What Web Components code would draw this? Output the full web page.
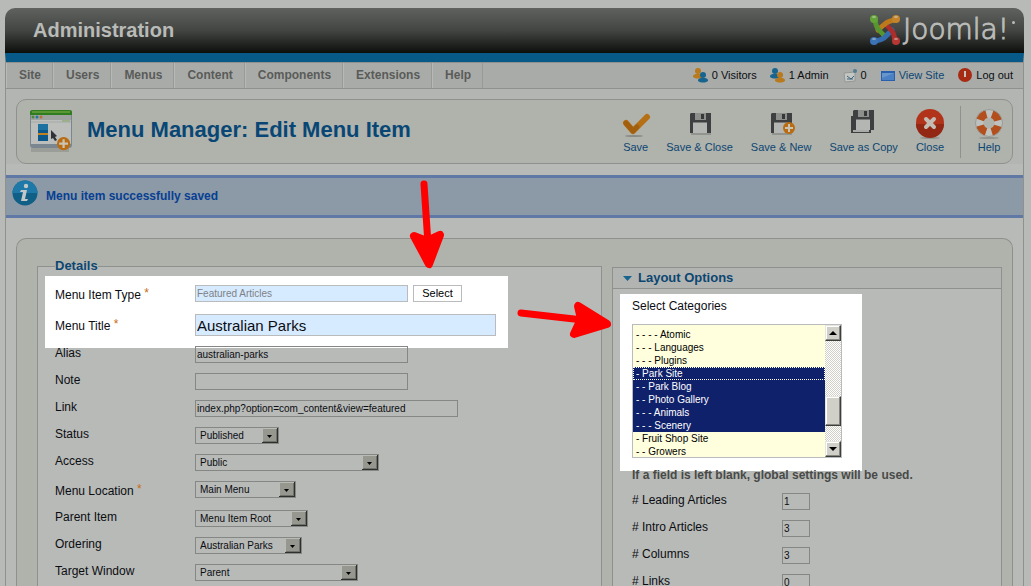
<!DOCTYPE html>
<html lang="en">
<head>
<meta charset="utf-8">
<title>Administration</title>
<style>
  html {
    scrollbar-width: none;
  }
  body {
    margin: 0;
    background: #b8bab7;
    color: #0b0d12;
    font: 12px/15px "Liberation Sans", Arial, sans-serif;
    --line: #8f918e;
    --link: #0c4672;
    --panel: #b0b2ac;
    --page: #b8bab7;
  }
</style>
</head>
<body>
<admin-page>
  <admin-header slot="header" heading="Administration"></admin-header>
  <menu-bar slot="header">
    <menu-entry>Site</menu-entry>
    <menu-entry>Users</menu-entry>
    <menu-entry>Menus</menu-entry>
    <menu-entry>Content</menu-entry>
    <menu-entry>Components</menu-entry>
    <menu-entry>Extensions</menu-entry>
    <menu-entry>Help</menu-entry>
    <status-item slot="status" icon="visitors">0 Visitors</status-item>
    <status-item slot="status" icon="admin">1 Admin</status-item>
    <status-item slot="status" icon="mail">0</status-item>
    <status-item slot="status" icon="screen" href="#site">View Site</status-item>
    <status-item slot="status" icon="power">Log out</status-item>
  </menu-bar>
  <tool-bar heading="Menu Manager: Edit Menu Item" icon="menu-add">
    <tool-button icon="save">Save</tool-button>
    <tool-button icon="disk">Save &amp; Close</tool-button>
    <tool-button icon="disk-new">Save &amp; New</tool-button>
    <tool-button icon="disk-copy">Save as Copy</tool-button>
    <tool-button icon="close">Close</tool-button>
    <tool-button icon="help" divided>Help</tool-button>
  </tool-bar>
  <system-message>Menu item successfully saved</system-message>
  <edit-layout>
    <details-group slot="main" heading="Details">
      <spot-light class="fields">
        <field-row label="Menu Item Type" value="Featured Articles" width="213" required readonly>
          <small-button>Select</small-button>
        </field-row>
        <field-row label="Menu Title" value="Australian Parks" width="301" required large></field-row>
      </spot-light>
      <field-row label="Alias" value="australian-parks" width="213"></field-row>
      <field-row label="Note" width="213"></field-row>
      <field-row label="Link" value="index.php?option=com_content&amp;view=featured" width="263"></field-row>
      <field-row type="select" label="Status" value="Published" width="84"></field-row>
      <field-row type="select" label="Access" value="Public" width="184"></field-row>
      <field-row type="select" label="Menu Location" value="Main Menu" width="101" required></field-row>
      <field-row type="select" label="Parent Item" value="Menu Item Root" width="113"></field-row>
      <field-row type="select" label="Ordering" value="Australian Parks" width="107"></field-row>
      <field-row type="select" label="Target Window" value="Parent" width="163"></field-row>
    </details-group>
    <option-panel slot="side" heading="Layout Options">
      <spot-light class="list">
        <category-list label="Select Categories"></category-list>
      </spot-light>
      <hint-text>If a field is left blank, global settings will be used.</hint-text>
      <field-row class="wide" label="# Leading Articles" value="1" width="28"></field-row>
      <field-row class="wide" label="# Intro Articles" value="3" width="28"></field-row>
      <field-row class="wide" label="# Columns" value="3" width="28"></field-row>
      <field-row class="wide" label="# Links" value="0" width="28"></field-row>
    </option-panel>
  </edit-layout>
  <arrow-marks slot="marks"></arrow-marks>
</admin-page>

<script>
const disk = `
  <path d="M6 2h20v20H5V3z" fill="#3d3f40"/>
  <path d="M10 2h11v7H10z" fill="#8d8f8d"/><path d="M16 3h3v5h-3z" fill="#353738"/>
  <path d="M8 11h14v11H8z" fill="#b4b6b3"/><path d="M8 11h14v1H8z" fill="#777976"/>`

const plus = `
  <circle cx="6" cy="6" r="6" fill="#b96c12"/>
  <path d="M6 2v8M2 6h8" stroke="#c9c5b5" stroke-width="2"/>`

const person = (x, y, fill) => `
  <g transform="translate(${x} ${y})" fill="${fill}">
    <circle cx="5" cy="3" r="3"/><path d="M0 9c0-3 2-3 5-3s5 0 5 3c-3 2-7 2-10 0z"/>
  </g>`

const icons = {
  visitors: ['0 0 16 16', person(0, 0, '#b9791d') + person(5, 4, '#17658f')],
  admin: ['0 0 16 16', person(0, 0, '#17658f') + person(5, 4, '#b9791d')],
  mail: ['0 0 16 16', `
    <path d="M2 5l11-1v9l-10 1z" fill="#c4c6c3" stroke="#959793"/>
    <path d="M5 8l4 3 3-3M5 11h6" stroke="#3e667e" fill="none"/>
    <circle cx="13" cy="3" r="2" fill="#557b90"/>`],
  screen: ['0 0 16 16', `
    <path d="M1 3h14v10H1z" fill="#285fae"/><path d="M2 5h12v7H2z" fill="#4b80c5"/>
    <path d="M2 5h12L2 10z" fill="#6796cd"/>`],
  power: ['0 0 16 16', `
    <circle cx="8" cy="7" r="7" fill="#a72a12"/>
    <path d="M8 3v6" stroke="#c7c4bf" stroke-width="2"/>`],
  save: ['0 0 32 32', `
    <ellipse cx="14" cy="28" rx="9" ry="1" fill="#888a86"/>
    <path d="M6 15l7 8L27 9" fill="none" stroke="#b56f14" stroke-width="6" stroke-linecap="round" stroke-linejoin="round"/>
    <path d="M6 15l7 8 4-4" fill="none" stroke="#a2600f" stroke-width="5" stroke-linecap="round" stroke-linejoin="round"/>`],
  disk: ['0 0 32 32', `<g transform="translate(1 3)"><path d="M6 23h20" stroke="#92948f" stroke-width="2"/>${disk}</g>`],
  'disk-new': ['0 0 32 32', `<g transform="translate(1 3)"><path d="M6 23h20" stroke="#92948f" stroke-width="2"/>${disk}</g>
    <g transform="translate(18 14)">${plus}</g>`],
  'disk-copy': ['0 0 32 32', `
    <path d="M3 8h20v17H3z" fill="#3d3f40"/><path d="M5 12h16v12H5z" fill="#a9aba8"/>
    <g>${disk}</g>`],
  close: ['0 0 32 32', `
    <ellipse cx="16" cy="30" rx="10" ry="1" fill="#91938e"/>
    <circle cx="16" cy="15" r="14" fill="#b1341a"/><path d="M2 16a14 14 0 0 0 28 0z" fill="#922814"/>
    <path d="M12 11l8 8M20 11l-8 8" stroke="#c3bcb5" stroke-width="4" stroke-linecap="round"/>`],
  help: ['0 0 32 32', `
    <ellipse cx="16" cy="30" rx="10" ry="1" fill="#91938e"/>
    <circle cx="16" cy="15" r="9.5" fill="none" stroke="#bfc1be" stroke-width="8"/>
    <circle cx="16" cy="15" r="9.5" fill="none" stroke="#b24f1d" stroke-width="8"
      stroke-dasharray="9 5.92" stroke-dashoffset="-2.96"/>
    <circle cx="16" cy="15" r="13.5" fill="none" stroke="#999b97"/>`],
  'menu-add': ['0 0 48 48', `
    <path d="M4 40h38v4H4z" fill="#9b9d98"/>
    <rect x="3" y="2" width="42" height="38" rx="3" fill="#7b8790"/>
    <path d="M4 8h40v28H4z" fill="#bcbebb"/>
    <path d="M3 7V4q0-2 3-2h36q3 0 3 2v3z" fill="#2f7d1f"/><path d="M5 3h38v2H5z" fill="#5c9735"/>
    <path d="M4 7h40v5H4z" fill="#9fa39f"/>
    <circle cx="6" cy="9" r="1.5" fill="#4c8a3a"/><circle cx="10" cy="9" r="1.5" fill="#2476a4"/>
    <circle cx="14" cy="9" r="1.5" fill="#b97032"/>
    <path d="M35 13h8" stroke="#7da250"/><path d="M4 14h40" stroke="#a5a8a5"/>
    <path d="M11 16h10v17H11z" fill="#0d588b"/><path d="M11 16h10v6H11z" fill="#1c71a0"/>
    <path d="M11 25h10v2H11z" fill="#c28120"/>
    <path d="M24 22l6 6-2 1 2 3-2 1-2-3-2 1z" fill="#2f3337"/>
    <g transform="translate(30 29) scale(1.1)">${plus}</g>`],
  info: ['0 0 26 26', `
    <circle cx="13" cy="13" r="12.5" fill="#0f5f86"/><path d="M.5 13a12.5 12.5 0 0 1 25 0z" fill="#1e78a8"/>
    <circle cx="14" cy="6" r="2.2" fill="#c2c7c8"/>
    <path d="M9 10h6l-2 9h3l-1 2H9l2-9H8z" fill="#c2c7c8"/>`],
  // four linked arms of the logo mark
  joomla: ['0 0 30 30', `
    <g fill="none" stroke-width="5" stroke-linecap="round" stroke-linejoin="round">
      <path d="M5 26q7-1 10-4l7-7" stroke="#356cae"/>
      <path d="M25 25q-1-7-4-10l-6-6" stroke="#ad2d2a"/>
      <path d="M25 5q-7 1-10 4l-7 6" stroke="#bd7a1d"/>
      <path d="M5 5q1 7 4 10l6 6" stroke="#57962f"/>
      <path d="M15 22l3-3" stroke="#356cae"/>
    </g>
    <path d="M12 15l3-3 3 3-3 3z" fill="#3a3d3b"/>
    <circle cx="4" cy="4" r="4" fill="#62a238"/><circle cx="26" cy="4" r="4" fill="#c3842b"/>
    <circle cx="4" cy="26" r="4" fill="#3b73b5"/><circle cx="26" cy="26" r="4" fill="#b73732"/>
    <ellipse cx="4" cy="2" rx="2" ry="1" fill="#a2bf8a"/><ellipse cx="26" cy="2" rx="2" ry="1" fill="#cdb486"/>
    <ellipse cx="4" cy="24" rx="2" ry="1" fill="#8ba5c6"/><ellipse cx="26" cy="24" rx="2" ry="1" fill="#c48d8b"/>`]
}

function icon (name, size) {
  const [box, body] = icons[name]
  return `<svg class="icon" width="${size}" height="${size}" viewBox="${box}" aria-hidden="true">${body}</svg>`
}

/**
 * Base class, puts the markup of render() in an open shadow root.
 */
class BaseElement extends HTMLElement {
  constructor () {
    super()
    this.attachShadow({ mode: 'open' })
  }

  connectedCallback () {
    this.shadowRoot.innerHTML = this.render()
  }

  attr (name, fallback = '') {
    return (this.getAttribute(name) || fallback).replace(/&/g, '&amp;').replace(/"/g, '&quot;')
  }
}

class AdminPage extends BaseElement {
  render () {
    return `
      <style>
        :host {
          display: flex;
          flex-direction: column;
          position: relative;
          box-sizing: border-box;
          min-height: 100vh;
          padding: 8px 7px 0 5px;
        }
        main {
          display: flex;
          flex-direction: column;
          flex: 1;
          border: solid var(--line);
          border-width: 0 1px;
        }
      </style>
      <slot name="header"></slot>
      <main><slot></slot></main>
      <slot name="marks"></slot>`
  }
}

class AdminHeader extends BaseElement {
  render () {
    return `
      <style>
        :host {
          display: flex;
          align-items: center;
          justify-content: space-between;
          box-sizing: border-box;
          height: 45px;
          padding: 0 9px 2px 28px;
          border-radius: 10px 10px 0 0;
          background: linear-gradient(#60625f, #434542 50%, #0c0e0b);
          color: #b9bbb8;
        }
        h1 {
          margin: 0;
          font-size: 20px;
          line-height: 24px;
        }
        .brand {
          display: flex;
          align-items: center;
          gap: 3px;
          color: inherit;
          text-decoration: none;
          font: 200 28px/30px "DejaVu Sans", sans-serif;
          -webkit-text-stroke: 1px;
        }
        .dot {
          align-self: start;
          width: 3px;
          height: 3px;
          margin-top: 6px;
          border-radius: 50%;
          background: currentColor;
        }
      </style>
      <h1>${this.attr('heading')}</h1>
      <a class="brand" href="#home">${icon('joomla', 30)}<span>Joomla!</span><span class="dot"></span></a>`
  }
}

class MenuBar extends BaseElement {
  render () {
    return `
      <style>
        :host {
          display: flex;
          justify-content: space-between;
          height: 26px;
          border: 1px solid var(--line);
          border-top: 9px solid #075a87;
          background: #a9aba8;
        }
        nav {
          display: flex;
          border-top: 1px solid var(--line);
        }
        .status {
          display: flex;
          flex: 1;
          align-items: center;
          justify-content: flex-end;
          gap: 13px;
          padding-right: 10px;
          border-top: 1px solid var(--line);
        }
      </style>
      <nav><slot></slot></nav>
      <div class="status"><slot name="status"></slot></div>`
  }
}

class MenuEntry extends BaseElement {
  render () {
    return `
      <style>
        :host {
          display: flex;
          border-right: 1px solid #989a97;
          box-shadow: inset 1px 0 #b7b9b6;
        }
        a {
          padding: 0 11px 0 13px;
          color: #595b59;
          font-weight: bold;
          line-height: 25px;
          text-decoration: none;
        }
      </style>
      <a href="#menu"><slot></slot></a>`
  }
}

class StatusItem extends BaseElement {
  render () {
    const link = this.hasAttribute('href')
    return `
      <style>
        :host {
          display: block;
          font-size: 11px;
        }
        a {
          display: flex;
          align-items: center;
          gap: 3px;
          color: ${link ? 'var(--link)' : 'inherit'};
          text-decoration: none;
        }
      </style>
      <a href="${this.attr('href', '#status')}">${icon(this.attr('icon'), 16)}<span><slot></slot></span></a>`
  }
}

class ToolBar extends BaseElement {
  render () {
    return `
      <style>
        :host {
          display: block;
          padding: 10px 10px 0;
          background: #b3b5b2;
        }
        .box {
          display: flex;
          align-items: center;
          justify-content: space-between;
          height: 63px;
          padding: 0 2px 0 10px;
          border: 1px solid var(--line);
          border-radius: 10px;
          background: var(--panel);
        }
        .title {
          display: flex;
          align-items: center;
          gap: 12px;
        }
        h2 {
          margin: 0;
          padding-bottom: 4px;
          color: #084775;
          font-size: 22px;
          line-height: 24px;
        }
        .tools {
          display: flex;
        }
      </style>
      <div class="box">
        <div class="title">${icon(this.attr('icon'), 48)}<h2>${this.attr('heading')}</h2></div>
        <div class="tools"><slot></slot></div>
      </div>`
  }
}

class ToolButton extends BaseElement {
  render () {
    return `
      <style>
        :host {
          display: block;
        }
        :host([divided]) {
          margin-left: 7px;
          padding-left: 7px;
          border-left: 1px solid var(--line);
        }
        button {
          display: flex;
          flex-direction: column;
          align-items: center;
          height: 52px;
          padding: 2px 9px 0;
          border: 0;
          background: none;
          color: var(--link);
          font: 11px/14px "Liberation Sans", Arial, sans-serif;
        }
        svg {
          margin: 0 -4px;
        }
      </style>
      <button type="button">${icon(this.attr('icon'), 32)}<span><slot></slot></span></button>`
  }
}

class SystemMessage extends BaseElement {
  render () {
    return `
      <style>
        :host {
          display: flex;
          gap: 8px;
          height: 37px;
          margin-top: 11px;
          padding-left: 6px;
          border: solid #5f78a5;
          border-width: 3px 0;
          background: #8c99a6;
          color: #063f93;
          font-size: 12px;
          font-weight: bold;
          line-height: 36px;
        }
        svg {
          margin-top: 2px;
        }
      </style>
      ${icon('info', 26)}<span role="status"><slot></slot></span>`
  }
}

class EditLayout extends BaseElement {
  render () {
    return `
      <style>
        :host {
          display: grid;
          grid-template-columns: minmax(0, 1fr) 390px;
          gap: 10px;
          flex: 1;
          margin: 20px 10px 0;
          padding: 19px 10px 0 20px;
          border: 1px solid var(--line);
          border-bottom: 0;
          border-radius: 10px 10px 0 0;
          background: var(--panel);
        }
      </style>
      <slot name="main"></slot>
      <slot name="side"></slot>`
  }
}

class DetailsGroup extends BaseElement {
  render () {
    return `
      <style>
        :host {
          display: grid;
        }
        fieldset {
          min-width: 0;
          margin: 0;
          padding: 2px 17px 0;
          border: 1px solid var(--line);
          border-bottom: 0;
          background: var(--page);
        }
        legend {
          padding: 0;
          color: var(--link);
          font-size: 13px;
          font-weight: bold;
          line-height: 16px;
        }
      </style>
      <fieldset>
        <legend>${this.attr('heading')}</legend>
        <slot></slot>
      </fieldset>`
  }
}

class OptionPanel extends BaseElement {
  render () {
    return `
      <style>
        :host {
          display: block;
          margin-top: 9px;
          padding: 0 19px;
          border: 1px solid var(--line);
          border-bottom: 0;
          background: var(--page);
        }
        h3 {
          display: flex;
          align-items: center;
          gap: 6px;
          margin: 0 -19px 5px;
          padding: 0 10px;
          border-bottom: 1px solid var(--line);
          background: #b2b4b1;
          color: var(--link);
          font-size: 13px;
          line-height: 20px;
        }
      </style>
      <h3>
        <svg width="9" height="5" viewBox="0 0 9 5" aria-hidden="true"><path d="M0 0h9L4.500 5z" fill="#17658f"/></svg>
        ${this.attr('heading')}
      </h3>
      <slot></slot>`
  }
}

// White area that lifts its content out of the dimmed page
class SpotLight extends BaseElement {
  render () {
    return `
      <style>
        :host {
          display: block;
          box-sizing: border-box;
          background: #fff;
          --field: #d6ebff;
          --field-line: #b9bbbd;
        }
        :host(.fields) {
          width: 463px;
          margin: 0 0 -2px -10px;
          padding: 9px 10px 2px;
        }
        :host(.list) {
          width: 242px;
          margin-left: -12px;
          padding: 5px 12px 13px;
        }
      </style>
      <slot></slot>`
  }
}

class SmallButton extends BaseElement {
  render () {
    return `
      <style>
        :host {
          display: block;
        }
        button {
          display: block;
          width: 49px;
          height: 17px;
          padding: 0;
          border: 1px solid #b9bbbd;
          background: #fff;
          color: #000;
          font: 11px/15px "Liberation Sans", Arial, sans-serif;
        }
      </style>
      <button type="button"><slot></slot></button>`
  }
}

/**
 * Label with a text box or a drop-down.
 */
class FieldRow extends BaseElement {
  control () {
    const value = this.attr('value')
    if (this.attr('type') === 'select') {
      return `
        <span class="drop">
          <select id="field"><option>${value}</option></select>
          <svg width="16" height="15" viewBox="0 0 16 15" aria-hidden="true">
            <path d="M0 0h16v15H0z" fill="#2e302e"/><path d="M0 0h15v14H0z" fill="#b9bbb5"/>
            <path d="M1 1h14v13H1z" fill="#6f716c"/><path d="M1 1h13v12H1z" fill="#96978f"/>
            <path d="M5 7h5L7.500 10z"/>
          </svg>
        </span>`
    }
    return `<input id="field" type="text" value="${value}" ${this.hasAttribute('readonly') ? 'readonly' : ''}>`
  }

  render () {
    const star = this.hasAttribute('required') ? ' <i>*</i>' : ''
    return `
      <style>
        :host {
          display: grid;
          grid-template-columns: 140px auto;
          justify-content: start;
          align-items: start;
          margin-bottom: 10px;
        }
        :host(.wide) {
          grid-template-columns: 150px auto;
        }
        .controls {
          display: flex;
          gap: 5px;
        }
        :host([required]) label {
          align-self: center;
          padding-top: 2px;
          line-height: 17px;
        }
        i {
          color: #c96c13;
          font-style: normal;
          vertical-align: 2px;
          line-height: 1;
        }
        input, select {
          box-sizing: border-box;
          width: ${this.attr('width')}px;
          height: 17px;
          margin: 0;
          padding: 0 1px;
          border: 1px solid var(--field-line, #858785);
          border-radius: 0;
          outline: 0;
          background: var(--field, transparent);
          color: inherit;
          font: 10px/15px "Liberation Sans", Arial, sans-serif;
        }
        input[readonly] {
          color: #7e8285;
        }
        :host([large]) input {
          height: 22px;
          font-size: 15px;
        }
        .drop {
          display: grid;
        }
        .drop > * {
          grid-area: 1 / 1;
        }
        select {
          appearance: none;
          padding: 0 4px;
        }
        svg {
          margin: 1px;
          justify-self: end;
          pointer-events: none;
        }
      </style>
      <label for="field">${this.attr('label')}${star}</label>
      <div class="controls">${this.control()}<slot></slot></div>`
  }
}

class HintText extends BaseElement {
  render () {
    return `
      <style>
        :host {
          display: block;
          position: relative;
          margin: -3px 0 10px;
          color: #484a48;
          font-weight: bold;
        }
      </style>
      <slot></slot>`
  }
}

class CategoryList extends BaseElement {
  render () {
    const rows = [
      ['- - - - Atomic'], ['- - - Languages'], ['- - - Plugins'],
      ['- Park Site', 1], ['- - Park Blog', 1], ['- - Photo Gallery', 1],
      ['- - - Animals', 1], ['- - - Scenery', 1],
      ['- Fruit Shop Site'], ['- - Growers']
    ]
    const options = rows.map(([text, on]) => `<option ${on ? 'selected' : ''}>${text}</option>`).join('')
    return `
      <style>
        :host {
          display: block;
        }
        label {
          display: block;
          margin-bottom: 10px;
        }
        .list {
          display: flex;
          width: 208px;
          height: 132px;
          border: 1px solid #b9bbbd;
        }
        select {
          flex: 1;
          height: 132px;
          margin: 0;
          padding: 3px 0 0;
          border: 0;
          border-radius: 0;
          outline: 0;
          overflow: hidden;
          scrollbar-width: none;
          background: #ffffde;
          color: #000;
          font: 10px/13px "Liberation Sans", Arial, sans-serif;
        }
        option {
          box-sizing: border-box;
          height: 13px;
          min-height: 13px;
          padding: 1px 3px 0;
          color: #000;
          font: 10px/13px "Liberation Sans", Arial, sans-serif;
        }
        option:checked {
          background: linear-gradient(#10216b, #10216b);
          -webkit-text-fill-color: #fff;
        }
        option:nth-child(4) {
          outline: 1px dotted #fff;
          outline-offset: -1px;
        }
        .bar {
          display: flex;
          flex-direction: column;
          width: 16px;
          background: repeating-conic-gradient(#fff 0 25%, #d0d0c8 0 50%) 0 0 / 2px 2px;
        }
        .key {
          box-sizing: border-box;
          display: grid;
          place-items: center;
          height: 16px;
          border: 1px solid;
          border-color: #e6e6e0 #3c3e3c #3c3e3c #e6e6e0;
          background: #d0d0c8;
          box-shadow: inset -1px -1px #86887f, inset 1px 1px #fff;
        }
        .thumb {
          height: 30px;
          margin: auto 0 15px;
        }
      </style>
      <label for="list">${this.attr('label')}</label>
      <div class="list">
        <select id="list" multiple size="10">${options}</select>
        <div class="bar" aria-hidden="true">
          <div class="key"><svg width="8" height="4" viewBox="0 0 8 4"><path d="M0 4h8L4 0z"/></svg></div>
          <div class="key thumb"></div>
          <div class="key"><svg width="8" height="4" viewBox="0 0 8 4"><path d="M0 0h8L4 4z"/></svg></div>
        </div>
      </div>`
  }
}

// Red arrows drawn on top of the page
class ArrowMarks extends BaseElement {
  render () {
    return `
      <style>
        :host {
          position: absolute;
          top: 0;
          left: 0;
          pointer-events: none;
        }
        svg {
          display: block;
        }
      </style>
      <svg width="620" height="350" viewBox="0 0 620 350" fill="red" stroke="red" stroke-linecap="round" stroke-linejoin="round" aria-hidden="true">
        <path d="M424 184l4 60" stroke-width="7"/>
        <path d="M429 264L414 236l13 5 13-6z" stroke-width="8"/>
        <path d="M521 313l62 7" stroke-width="7"/>
        <path d="M607 324L578 306l3 13-7 15z" stroke-width="8"/>
      </svg>`
  }
}

window.customElements.define('admin-page', AdminPage)
window.customElements.define('admin-header', AdminHeader)
window.customElements.define('menu-bar', MenuBar)
window.customElements.define('menu-entry', MenuEntry)
window.customElements.define('status-item', StatusItem)
window.customElements.define('tool-bar', ToolBar)
window.customElements.define('tool-button', ToolButton)
window.customElements.define('system-message', SystemMessage)
window.customElements.define('edit-layout', EditLayout)
window.customElements.define('details-group', DetailsGroup)
window.customElements.define('option-panel', OptionPanel)
window.customElements.define('spot-light', SpotLight)
window.customElements.define('small-button', SmallButton)
window.customElements.define('field-row', FieldRow)
window.customElements.define('hint-text', HintText)
window.customElements.define('category-list', CategoryList)
window.customElements.define('arrow-marks', ArrowMarks)
</script>
</body>
</html>
